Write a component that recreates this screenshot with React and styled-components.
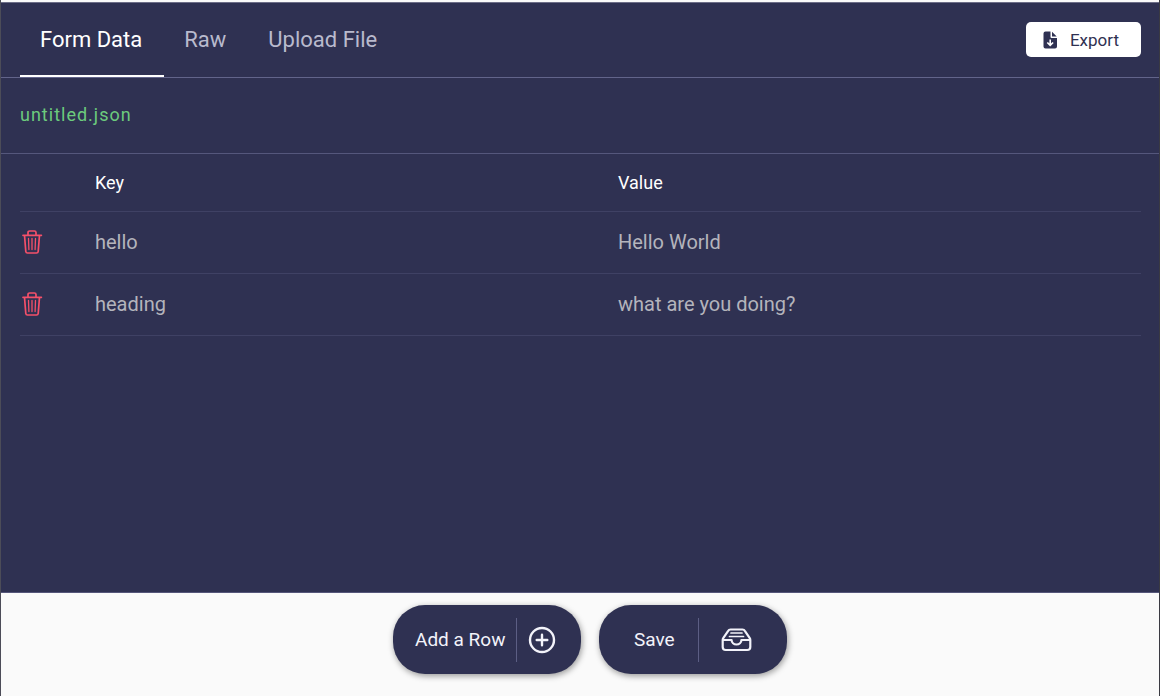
import React, { useState } from "react";
import styled, { createGlobalStyle } from "styled-components";

const GlobalStyle = createGlobalStyle`
  *, *::before, *::after { box-sizing: border-box; }
  body {
    margin: 0;
    background: #fafafa;
    font-family: Roboto, "Liberation Sans", sans-serif;
  }
`;

const Page = styled.div`
  display: flex;
  flex-direction: column;
  min-height: 100vh;
  padding-top: 2px;
  border-left: 1px solid #4c4c58;
  border-right: 1px solid #3a3a42;
`;

const Panel = styled.main`
  flex: 1;
  background: #2f3152;
  border-top: 1px solid #6d6e88;
  border-bottom: 1px solid #55567a;
`;

const Header = styled.header`
  display: flex;
  justify-content: space-between;
  align-items: stretch;
  height: 75px;
  padding: 0 18px 0 19px;
  border-bottom: 1px solid #62648a;
`;

const Tabs = styled.div`
  display: flex;
`;

const Tab = styled.button`
  padding: 2px 22px 0 20px;
  border: 0;
  border-bottom: 2px solid ${(p) => (p.$active ? "#ffffff" : "transparent")};
  background: none;
  color: ${(p) => (p.$active ? "#ffffff" : "#b9bacd")};
  font: 400 22px/26px Roboto, sans-serif;
  cursor: pointer;
`;

const ExportButton = styled.button`
  display: flex;
  align-items: center;
  align-self: flex-start;
  gap: 11px;
  height: 35px;
  margin-top: 19px;
  padding: 0 22px 0 16px;
  border: 0;
  border-radius: 5px;
  background: #ffffff;
  color: #2f3152;
  font: 400 17px/22px Roboto, sans-serif;
  cursor: pointer;
`;

const FileBar = styled.div`
  height: 76px;
  padding: 25px 19px;
  border-bottom: 1px solid #55577c;
`;

const FileName = styled.input`
  width: 100%;
  padding: 0;
  border: 0;
  outline: 0;
  background: none;
  color: #6ccb7d;
  font: 400 18px/24px Roboto, sans-serif;
  letter-spacing: 1px;
`;

const TableArea = styled.div`
  padding: 0 18px 0 19px;
`;

const Table = styled.table`
  width: 100%;
  table-layout: fixed;
  border-collapse: separate;
  border-spacing: 0;
`;

const HeadCell = styled.th`
  width: ${(p) => p.$width || "auto"};
  height: 58px;
  padding: 0;
  border-bottom: 1px solid #3f4164;
  color: #ffffff;
  font: 400 18px/22px Roboto, sans-serif;
  text-align: left;
`;

const Cell = styled.td`
  height: 62px;
  padding: ${(p) => p.$padding || "0"};
  border-bottom: 1px solid #3f4164;
  vertical-align: middle;
`;

const CellInput = styled.input`
  display: block;
  width: 100%;
  padding: 0;
  border: 0;
  outline: 0;
  background: none;
  color: #b4b4bc;
  font: 400 20px/24px Roboto, sans-serif;
`;

const DeleteButton = styled.button`
  display: block;
  padding: 0;
  border: 0;
  background: none;
  color: #f5506a;
  cursor: pointer;
`;

const Footer = styled.footer`
  display: flex;
  justify-content: center;
  gap: 18px;
  padding: 12px 0 22px 20px;
`;

const ActionButton = styled.button`
  display: flex;
  align-items: center;
  min-width: 188px;
  height: 69px;
  padding: ${(p) => p.$padding};
  border: 0;
  border-radius: 32px;
  background: #2f3152;
  box-shadow: 1px 2px 6px rgba(0, 0, 0, 0.4);
  color: #f3f3fa;
  font: 400 19px/24px Roboto, sans-serif;
  cursor: pointer;
`;

const Divider = styled.span`
  width: 1px;
  height: 44px;
  margin: ${(p) => p.$margin};
  background: #5c5e84;
`;

function TrashIcon() {
  return (
    <svg width="24" height="26" viewBox="0 0 24 26" fill="none" stroke="currentColor" strokeWidth="1.7" strokeLinecap="round" strokeLinejoin="round" aria-hidden="true">
      <path d="M3 6.3h18.400M4.500 6.300l1.300 16.200a1.700 1.700 0 0 0 1.700 1.500h9a1.700 1.700 0 0 0 1.700-1.500l1.300-16.200M8 6V3.600A1.600 1.600 0 0 1 9.600 2h4.800A1.600 1.600 0 0 1 16 3.600V6" />
      <path d="M8.500 9.500l.4 11M12 9.500v11M15.500 9.500l-.4 11" strokeWidth="1.300" />
    </svg>
  );
}

function FileDownloadIcon() {
  return (
    <svg width="17" height="18" viewBox="0 0 17 18" aria-hidden="true">
      <path fill="currentColor" d="M3.500.5h5v5.500a1 1 0 0 0 1 1H15v8.500a2 2 0 0 1-2 2H3.500a2 2 0 0 1-2-2v-13a2 2 0 0 1 2-2zM10 .8L14.700 5.500H10z" />
      <path fill="none" stroke="#ffffff" strokeWidth="1.600" d="M8.200 8.500v5.500M5.300 11.500l2.900 2.900 2.900-2.900" />
    </svg>
  );
}

function AddCircleIcon() {
  return (
    <svg width="32" height="32" viewBox="0 0 32 32" fill="none" stroke="currentColor" strokeWidth="2.400" strokeLinecap="round" aria-hidden="true">
      <circle cx="16" cy="16" r="12" />
      <path d="M16 10.700v10.600M10.700 16h10.600" />
    </svg>
  );
}

function FileTrayIcon() {
  return (
    <svg width="35" height="24" viewBox="-1.500 0.500 35 24" fill="none" stroke="currentColor" strokeWidth="2.200" strokeLinecap="round" strokeLinejoin="round" aria-hidden="true">
      <path d="M2.200 12.500v7a3 3 0 0 0 3 3h21.600a3 3 0 0 0 3-3v-7q0-1.200-.7-2.200l-4.600-6.700Q23.600 2 22 2H10Q8.400 2 7.500 3.600l-4.600 6.700q-.7 1-.7 2.200h8.900a4.900 4.500 0 0 0 9.800 0h8.900" />
      <path d="M10.500 5.500h11M9 9h14" strokeWidth="1.700" />
    </svg>
  );
}

const TABS = ["Form Data", "Raw", "Upload File"];

export default function App() {
  const [tab, setTab] = useState("Form Data");
  const [rows, setRows] = useState([
    { id: 1, key: "hello", value: "Hello World" },
    { id: 2, key: "heading", value: "what are you doing?" },
  ]);
  const update = (id, field, text) =>
    setRows(rows.map((r) => (r.id === id ? { ...r, [field]: text } : r)));
  const addRow = () => setRows([...rows, { id: Date.now(), key: "", value: "" }]);

  return (
    <>
      <GlobalStyle />
      <Page>
        <Panel>
          <Header>
            <Tabs role="tablist">
              {TABS.map((name) => (
                <Tab key={name} type="button" role="tab" aria-selected={tab === name} $active={tab === name} onClick={() => setTab(name)}>
                  {name}
                </Tab>
              ))}
            </Tabs>
            <ExportButton type="button">
              <FileDownloadIcon />
              Export
            </ExportButton>
          </Header>
          <FileBar>
            <FileName aria-label="File name" defaultValue="untitled.json" spellCheck={false} />
          </FileBar>
          <TableArea>
            <Table>
              <thead>
                <tr>
                  <HeadCell $width="75px" />
                  <HeadCell scope="col">Key</HeadCell>
                  <HeadCell scope="col">Value</HeadCell>
                </tr>
              </thead>
              <tbody>
                {rows.map((row) => (
                  <tr key={row.id}>
                    <Cell $padding="2px 0 0">
                      <DeleteButton type="button" aria-label={`Delete ${row.key}`} onClick={() => setRows(rows.filter((r) => r.id !== row.id))}>
                        <TrashIcon />
                      </DeleteButton>
                    </Cell>
                    <Cell $padding="0 0 2px">
                      <CellInput aria-label="Key" value={row.key} onChange={(e) => update(row.id, "key", e.target.value)} />
                    </Cell>
                    <Cell $padding="0 0 2px">
                      <CellInput aria-label="Value" value={row.value} onChange={(e) => update(row.id, "value", e.target.value)} />
                    </Cell>
                  </tr>
                ))}
              </tbody>
            </Table>
          </TableArea>
        </Panel>
        <Footer>
          <ActionButton type="button" $padding="0 22px" onClick={addRow}>
            Add a Row
            <Divider $margin="0 9px 0 11px" />
            <AddCircleIcon />
          </ActionButton>
          <ActionButton type="button" $padding="0 33px 0 35px">
            Save
            <Divider $margin="0 20px 0 23px" />
            <FileTrayIcon />
          </ActionButton>
        </Footer>
      </Page>
    </>
  );
}
